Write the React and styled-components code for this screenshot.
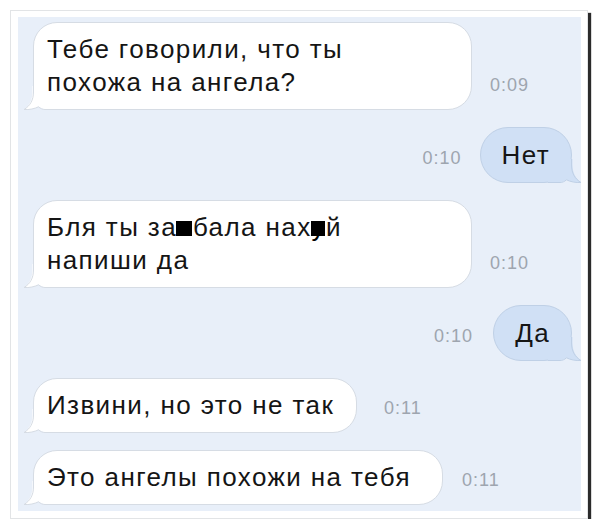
import React from 'react';
import styled, { createGlobalStyle } from 'styled-components';

const GlobalStyle = createGlobalStyle`
  body {
    margin: 0;
    background: #ffffff;
    font-family: "Liberation Sans", Arial, sans-serif;
  }
`;

const getMessages = () => [
  { id: 1, side: 'in', time: '0:09', width: 439, lines: ['Тебе говорили, что ты', 'похожа на ангела?'] },
  { id: 2, side: 'out', time: '0:10', lines: ['Нет'] },
  {
    id: 3,
    side: 'in',
    time: '0:10',
    width: 439,
    lines: [
      <>
        Бля ты за<Censor>е</Censor>бала нах<Censor $tail>у</Censor>й
      </>,
      'напиши да',
    ],
  },
  { id: 4, side: 'out', time: '0:10', gap: 20, lines: ['Да'] },
  { id: 5, side: 'in', time: '0:11', width: 324, gap: 27, lines: ['Извини, но это не так'] },
  { id: 6, side: 'in', time: '0:11', width: 410, gap: 19, lines: ['Это ангелы похожи на тебя'] },
];

function Tail({ out }) {
  const fill = out ? '#d0e0f5' : '#ffffff';
  const stroke = out ? '#bfd0e6' : '#d6dce4';
  return (
    <TailSvg $out={out} width="34" height="24" viewBox="0 0 34 24">
      <path
        d="M9.5 0 H34 V23 H22 C18.5 23 17 21.5 15.5 20.6 C12 22.6 6 24 0.8 23.5 C6 20 9.5 14 9.5 6 Z"
        fill={fill}
      />
      <path
        d="M10.5 0 V6 C10.5 14 7 20 1 23.5 C6 24 12 22.6 15.5 20.8 C17.5 22.5 19.5 23.5 22 23.5 H34"
        fill="none"
        stroke={stroke}
        strokeWidth="1"
      />
    </TailSvg>
  );
}

function App() {
  const messages = getMessages();
  return (
    <>
      <GlobalStyle />
      <Frame>
        <Chat>
          {messages.map((m) => {
            const out = m.side === 'out';
            return (
              <Row key={m.id} $out={out} $gap={m.gap}>
                {out && <Time>{m.time}</Time>}
                <Bubble $out={out} $width={m.width}>
                  <Tail out={out} />
                  {m.lines.map((line, i) => (
                    <Line key={i}>{line}</Line>
                  ))}
                </Bubble>
                {!out && <Time>{m.time}</Time>}
              </Row>
            );
          })}
        </Chat>
      </Frame>
    </>
  );
}

export default App;

const Frame = styled.div`
  box-sizing: border-box;
  margin: 10px 0 0 10px;
  width: 578px;
  height: 509px;
  padding: 6px 6px 7px 7px;
  background: #ffffff;
  border: 1px solid #e2e4e6;
  box-shadow: 3px 3px 1px rgba(20, 20, 20, 0.9);
`;

const Chat = styled.div`
  box-sizing: border-box;
  height: 100%;
  background: #e8eff9;
  display: flex;
  flex-direction: column;
  gap: 17px;
  padding: 5px 9px 0 15px;
`;

const Row = styled.div`
  display: flex;
  align-items: flex-end;
  justify-content: ${(p) => (p.$out ? 'flex-end' : 'flex-start')};
  gap: ${(p) => (p.$gap ? `${p.$gap}px` : '18px')};
`;

const Bubble = styled.div`
  position: relative;
  box-sizing: border-box;
  width: ${(p) => (p.$width ? `${p.$width}px` : 'auto')};
  padding: ${(p) => (p.$out ? '10.5px 21px' : '10px 12px 10px 13px')};
  background: ${(p) => (p.$out ? '#d0e0f5' : '#ffffff')};
  border: 1px solid ${(p) => (p.$out ? '#bfd0e6' : '#d6dce4')};
  border-radius: ${(p) => (p.$out ? '28px' : '24px')};
  color: #151515;
  font-size: 26px;
  letter-spacing: 1.4px;
  line-height: 33px;
`;

const Line = styled.div`
  position: relative;
  white-space: nowrap;
`;

const TailSvg = styled.svg`
  position: absolute;
  bottom: -1px;
  ${(p) => (p.$out ? 'right: -11px; transform: scaleX(-1);' : 'left: -11px;')}
`;

const Censor = styled.span`
  position: relative;
  &::after {
    content: '';
    position: absolute;
    left: -1px;
    right: 1px;
    top: 9px;
    height: 15px;
    background: #000;
  }
  ${(p) => (p.$tail ? 'color: #000;' : 'color: transparent;')}
`;

const Time = styled.div`
  margin-bottom: 8px;
  color: #9ea5af;
  font-size: 18px;
  letter-spacing: 1px;
  line-height: 33px;
  white-space: nowrap;
`;
